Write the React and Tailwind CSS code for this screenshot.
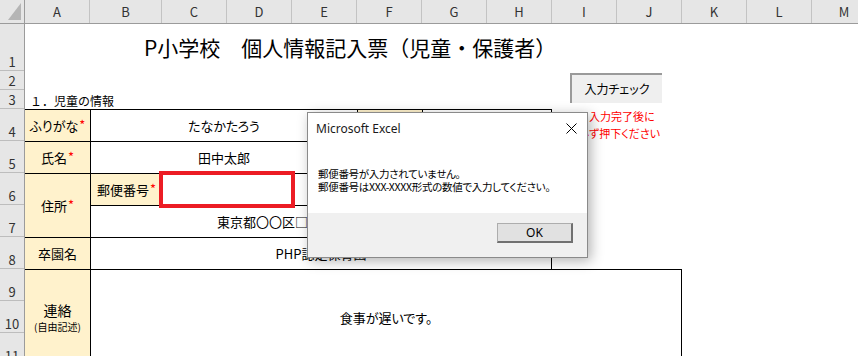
import React from 'react';

const columns = [
    ['A', 'w-[65px]'],
    ['B', 'w-[72px]'],
    ['C', 'w-[65px]'],
    ['D', 'w-[65px]'],
    ['E', 'w-[65px]'],
    ['F', 'w-[65px]'],
    ['G', 'w-[65px]'],
    ['H', 'w-[65px]'],
    ['I', 'w-[65px]'],
    ['J', 'w-[65px]'],
    ['K', 'w-[65px]'],
    ['L', 'w-[65px]'],
    ['M', 'w-[65px]'],
];

const rows = [
    ['1', 'h-[47px]'],
    ['2', 'h-[19px]'],
    ['3', 'h-[19px]'],
    ['4', 'h-[32px]'],
    ['5', 'h-[32px]'],
    ['6', 'h-[32px]'],
    ['7', 'h-[32px]'],
    ['8', 'h-[32px]'],
    ['9', 'h-[32px]'],
    ['10', 'h-[32px]'],
    ['11', 'h-[32px]'],
];

const Req = () => <span className="text-[#ff0000] text-[13px] leading-none ml-[1px] relative -top-[1px]">*</span>;

const Label = ({ className, children }) => (
    <div className={`flex items-center justify-center bg-[#fff2cc] border-t border-black text-[13px] ${className}`}>
        {children}
    </div>
);

const Value = ({ className, children }) => (
    <div className={`flex items-center justify-center bg-white border-t border-l border-black text-[13px] ${className}`}>
        {children}
    </div>
);

const App = () => {
    return (
        <div className="relative w-[858px] h-[356px] overflow-hidden bg-white text-black font-['Noto_Sans_CJK_JP',sans-serif] [font-feature-settings:'palt']">
            {/* column headers */}
            <div className="flex h-[24px] bg-[#e6e6e6] border-b border-[#9b9b9b]">
                <div className="w-[25px] shrink-0 border-r border-[#9b9b9b] flex items-end justify-end pr-[3px] pb-[3px]">
                    <svg width="13" height="17" viewBox="0 0 13 17">
                        <polygon points="13,0 13,17 0,17" fill="#b5b5b5" />
                    </svg>
                </div>
                {columns.map(([name, w]) => (
                    <div key={name} className={`${w} shrink-0 border-r border-[#c3c3c3] flex items-center justify-center text-[13px] text-[#333]`}>
                        {name}
                    </div>
                ))}
            </div>

            <div className="flex">
                {/* row headers */}
                <div className="w-[25px] shrink-0 flex flex-col bg-[#e6e6e6] border-r border-[#9b9b9b]">
                    {rows.map(([n, h]) => (
                        <div key={n} className={`${h} shrink-0 border-b border-[#bdbdbd] flex items-end justify-center text-[13px] leading-[17px] text-[#333]`}>
                            {n}
                        </div>
                    ))}
                </div>

                {/* sheet */}
                <div className="grid grid-cols-[65px_72px_repeat(11,65px)] grid-rows-[47px_19px_19px_repeat(8,32px)]">
                    <div className="col-start-1 col-span-10 row-start-1 flex items-center pl-[119px] text-[21px] [font-feature-settings:normal]">
                        P小学校　個人情報記入票（児童・保護者）
                    </div>
                    <div className="col-start-1 col-span-4 row-start-3 flex items-end pl-[5px] text-[12px] leading-[17px] [font-feature-settings:normal]">
                        １．児童の情報
                    </div>

                    <Label className="col-start-1 row-start-4">ふりがな<Req /></Label>
                    <Value className="col-start-2 col-span-4 row-start-4">たなかたろう</Value>
                    <Label className="col-start-6 row-start-4 border-l">性別</Label>
                    <Value className="col-start-7 col-span-2 row-start-4 border-r">男</Value>

                    <Label className="col-start-1 row-start-5">氏名<Req /></Label>
                    <Value className="col-start-2 col-span-4 row-start-5">田中太郎</Value>
                    <Label className="col-start-6 row-start-5 border-l">生年月日</Label>
                    <Value className="col-start-7 col-span-2 row-start-5 border-r">2018/4/1</Value>

                    <Label className="col-start-1 row-start-6 row-span-2">住所<Req /></Label>
                    <Label className="col-start-2 row-start-6 border-l">郵便番号<Req /></Label>
                    <Value className="col-start-3 col-span-6 row-start-6 border-r" />
                    <div className="col-start-3 col-span-2 row-start-6 -mx-[3px] -mt-[2px] -mb-[3px] border-4 border-[#ec1c24] z-10" />
                    <Value className="col-start-2 col-span-7 row-start-7 border-r [font-feature-settings:normal]">東京都〇〇区□□町１丁目２番３号</Value>

                    <Label className="col-start-1 row-start-8">卒園名</Label>
                    <Value className="col-start-2 col-span-7 row-start-8 border-r">PHP認定保育園</Value>

                    <Label className="col-start-1 row-start-9 row-span-3 flex-col gap-[1px]">
                        <span className="text-[14px] leading-[17px]">連絡</span>
                        <span className="text-[10px] leading-[13px]">(自由記述)</span>
                    </Label>
                    <Value className="col-start-2 col-span-9 row-start-9 row-span-3 border-r">食事が遅いです。</Value>
                </div>
            </div>

            {/* floating button */}
            <div className="absolute left-[570px] top-[73px] w-[92px] h-[30px] bg-[#efefef] border-t-2 border-l-2 border-[#9a9a9a] flex items-center justify-center text-[12px]">
                入力チェック
            </div>

            {/* note text box */}
            <div className="absolute left-[578px] top-[108px] text-[11px] leading-[17px] text-[#ff0000]">
                <div>※入力完了後に</div>
                <div>必ず押下ください</div>
            </div>

            {/* message box */}
            <div className="absolute left-[307px] top-[112px] w-[281px] h-[146px] flex flex-col bg-white border border-[#8a8a8a] shadow-[3px_3px_12px_rgba(0,0,0,0.3)]">
                <div className="h-[31px] flex items-center justify-between pl-[8px] pr-[10px]">
                    <span className="font-['Noto_Sans',sans-serif] text-[12px] text-[#1a1a1a]">Microsoft Excel</span>
                    <svg width="11" height="11" viewBox="0 0 11 11">
                        <path d="M0.5 0.5 L10.5 10.5 M10.5 0.5 L0.5 10.5" stroke="#000" strokeWidth="1" />
                    </svg>
                </div>
                <div className="flex-1 pl-[10px] pt-[23px] text-[10.5px] leading-[13px] tracking-[-0.3px]">
                    <div>郵便番号が入力されていません。</div>
                    <div>郵便番号はXXX-XXXX形式の数値で入力してください。</div>
                </div>
                <div className="h-[44px] bg-[#f0f0f0] flex justify-end items-start pt-[10px] pr-[14px]">
                    <div className="w-[76px] h-[20px] bg-[#e1e1e1] border border-[#adadad] border-r-2 border-b-2 border-r-[#707070] border-b-[#707070] flex items-center justify-center font-['Noto_Sans',sans-serif] text-[12px]">
                        OK
                    </div>
                </div>
            </div>
        </div>
    );
};

export default App;
